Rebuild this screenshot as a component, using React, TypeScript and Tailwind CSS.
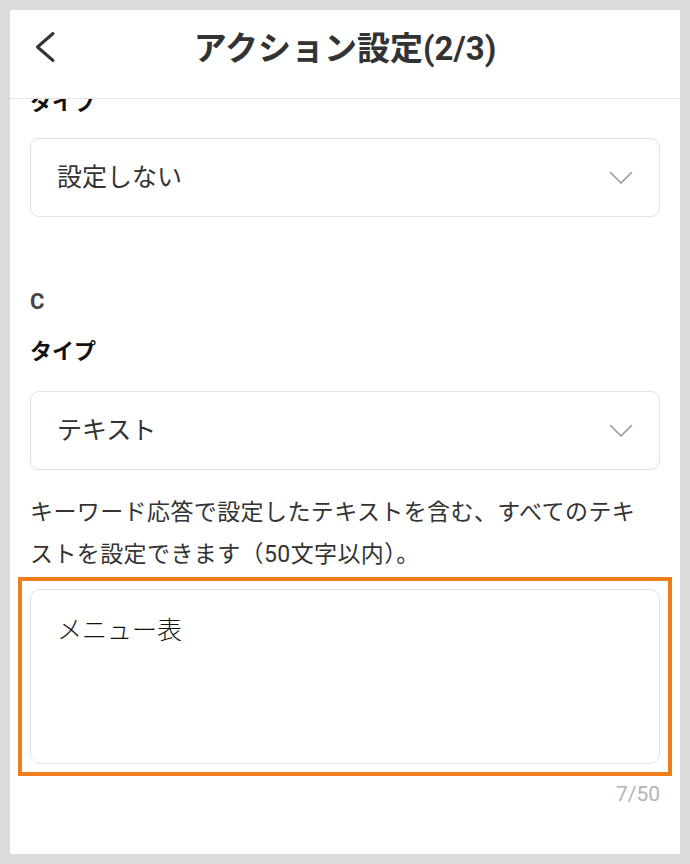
const fontStack = "font-['Roboto','Noto_Sans_CJK_JP',sans-serif]";

function ChevronDown() {
  return (
    <svg width="24" height="14" viewBox="0 0 24 14" fill="none" className="shrink-0">
      <polyline
        points="1.5,1.5 12,12 22.5,1.5"
        stroke="#9a9a9a"
        strokeWidth="1.6"
        strokeLinecap="round"
        strokeLinejoin="round"
      />
    </svg>
  );
}

function SelectBox({ value }: { value: string }) {
  return (
    <div className="flex h-[79px] items-center justify-between rounded-[9px] border border-[#e2e2e2] bg-white pl-[26px] pr-[26px]">
      <span className="text-[25px] leading-[32px] text-[#333]">{value}</span>
      <ChevronDown />
    </div>
  );
}

export default function App() {
  return (
    <div className={`h-[864px] w-[690px] bg-[#dbdbdb] p-[10px] ${fontStack}`}>
      <div className="flex h-full flex-col bg-white">
        <header className="relative flex h-[89px] shrink-0 justify-center border-b border-[#e4e4e4] pt-[17px]">
          <button className="absolute left-[15px] top-[11px] p-[10px]">
            <svg width="22" height="32" viewBox="0 0 22 32" fill="none">
              <polyline
                points="18,2.5 2.5,16 18,29.5"
                stroke="#333"
                strokeWidth="3"
                strokeLinecap="round"
                strokeLinejoin="round"
              />
            </svg>
          </button>
          <h1 className="text-[33px] font-bold leading-[44px] text-[#333]">
            アクション設定(2/3)
          </h1>
        </header>

        <main className="flex-1 overflow-hidden px-[20px]">
          {/* 前のアクション(B)の末尾がヘッダーの下に隠れている */}
          <div className="-mt-[11px]">
            <p className="text-[22px] font-bold leading-[30px] text-[#111]">タイプ</p>
            <div className="mt-[20px]">
              <SelectBox value="設定しない" />
            </div>
          </div>

          <p className="mt-[70px] text-[22px] font-bold leading-[30px] text-[#444]">C</p>
          <p className="mt-[20px] text-[22px] font-bold leading-[30px] text-[#111]">タイプ</p>
          <div className="mt-[24px]">
            <SelectBox value="テキスト" />
          </div>

          <p className="mt-[22px] text-[23px] leading-[42px] tracking-[0.4px] text-[#333]">
            キーワード応答で設定したテキストを含む、すべてのテキ
            <br />
            ストを設定できます（50文字以内）。
          </p>

          <div className="-mx-[12px] mt-[1px] border-4 border-[#ef7d1c] p-[8px]">
            <textarea
              defaultValue="メニュー表"
              className="block h-[175px] w-full resize-none rounded-[10px] border border-[#e2e2e2] px-[26px] pt-[24px] text-[25px] font-light leading-[34px] text-[#111] outline-none"
            />
          </div>
          <p className="mt-[4px] text-right text-[21px] leading-[28px] text-[#b3b3b3]">7/50</p>
        </main>
      </div>
    </div>
  );
}
